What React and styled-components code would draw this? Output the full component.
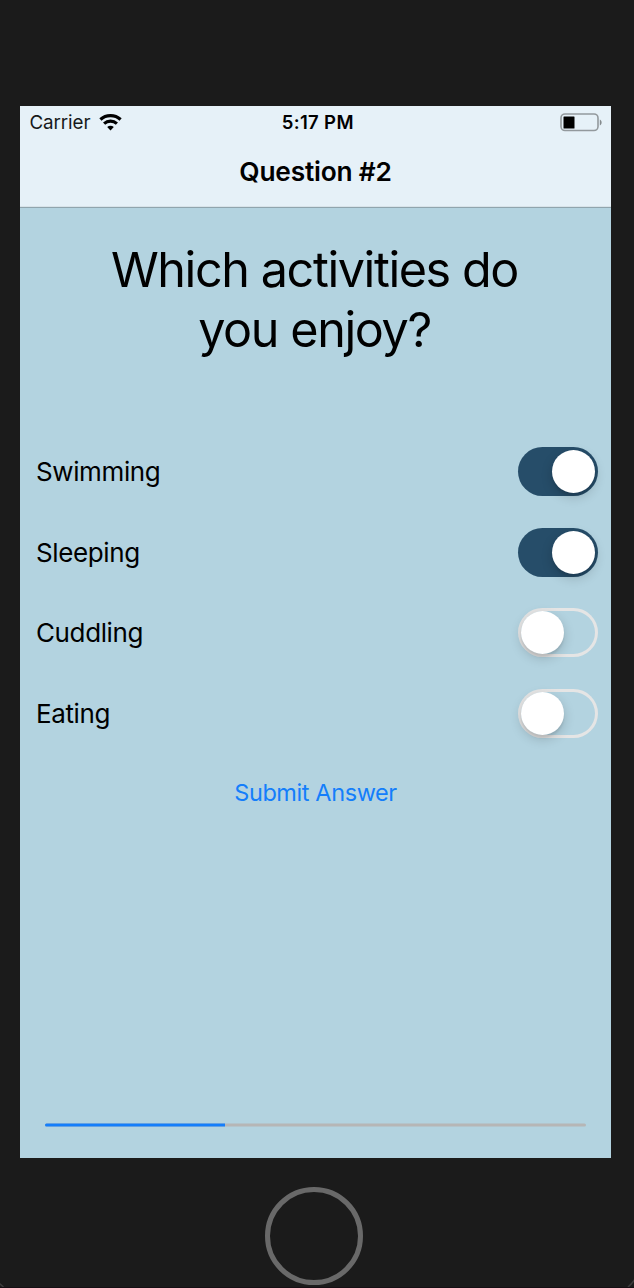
import React from 'react';
import styled, { createGlobalStyle } from 'styled-components';

const Global = createGlobalStyle`
  * { box-sizing: border-box; }
  body { margin: 0; background: #1a1a1a; font-family: Inter, sans-serif; color: #000; }
`;
const Device = styled.main`
  position: relative;
  height: 1288px;
  width: 634px;
  padding: 106px 23px 0 20px;
  background: #1b1b1b;
  border-bottom: 1px solid #160f14;
  overflow: hidden;
`;
const DeviceCorners = styled.svg`
  position: absolute;
  left: 0;
  bottom: 0;
`;
const Screen = styled.section`
  height: 1052px;
  background: #b3d3e0;
  display: flex;
  flex-direction: column;
`;
const Header = styled.header`
  height: 102px;
  flex: none;
  background: #e6f1f8;
  border-bottom: 1px solid #90a5ae;
  box-shadow: inset 0 -1px #d8e3e9;
`;
const StatusBar = styled.div`
  height: 33px;
  padding: 0 9px 0 9.5px;
  display: grid;
  grid-template-columns: 1fr auto 1fr;
  align-items: center;
`;
const Carrier = styled.div`
  display: flex;
  align-items: center;
  gap: 8.5px;
  font-size: 18.8px;
  line-height: 24px;
  letter-spacing: -0.1px;
  color: #16191b;
`;
const Time = styled.time`
  font-size: 18.5px;
  font-weight: 600;
  line-height: 24px;
  letter-spacing: 0.35px;
  padding: 0 0 1px 4px;
`;
const Battery = styled.svg`
  justify-self: end;
`;
const NavTitle = styled.h1`
  margin: 0;
  height: 66px;
  line-height: 66px;
  text-align: center;
  font-size: 26.3px;
  font-weight: 600;
  letter-spacing: -0.2px;
`;
const Question = styled.h2`
  margin: 32px 0 0;
  padding-right: 2px;
  text-align: center;
  font-weight: 400;
  font-size: 48.5px;
  line-height: 60px;
  letter-spacing: -1.4px;
`;
const Options = styled.div`
  margin-top: 71.7px;
`;
const Row = styled.label`
  height: 80.4px;
  padding: 0 13px 0 16px;
  display: flex;
  align-items: center;
  justify-content: space-between;
  font-size: 26px;
  letter-spacing: -0.38px;
`;
const Track = styled.span`
  width: 80px;
  height: 49px;
  padding: 3px;
  border-radius: 25px;
  display: flex;
  justify-content: ${p => (p.$on ? 'flex-end' : 'flex-start')};
  background: ${p => (p.$on ? '#264d69' : 'transparent')};
  box-shadow: ${p => (p.$on ? 'none' : 'inset 0 0 0 3px #e5e5e5')};
`;
const Knob = styled.span`
  width: 43px;
  height: 43px;
  border-radius: 50%;
  background: #fff;
  box-shadow: 0 4px 12px rgba(0,0,0,.18), 0 3px 2px rgba(0,0,0,.07);
`;
const Submit = styled.button`
  align-self: center;
  border: 0;
  padding: 0;
  margin-top: 22px;
  background: none;
  color: #147efb;
  font: 400 23.5px/36px Inter, sans-serif;
  letter-spacing: -0.4px;
`;
const Progress = styled.div`
  margin: auto 25px 32px;
  height: 3px;
  border-radius: 2px;
  background: #b6b6b6;
  transform: translateY(0.5px);
`;
const Fill = styled.div`
  height: 100%;
  width: 33.3%;
  border-radius: 2px 0 0 2px;
  background: #147efb;
`;
const Home = styled.div`
  width: 98px;
  height: 98px;
  margin: 29px 0 0 245px;
  border: 5px solid #696969;
  border-radius: 50%;
`;

const options = [['Swimming', true], ['Sleeping', true], ['Cuddling', false], ['Eating', false]];

export default function App() {
  return (
    <Device>
      <Global />
      <Screen>
        <Header>
          <StatusBar>
            <Carrier>
              <span>Carrier</span>
              <svg width="23" height="17" viewBox="0 0 23 17" fill="none" stroke="#000" strokeWidth="3.2">
                <path d="M1.4 5.5c5.7-5.2 14.5-5.2 20.2 0" />
                <path d="M5.1 9.6c3.6-3.2 9.2-3.2 12.8 0" />
                <path d="M11.5 16.4l-3.3-3.3c1.8-1.7 4.8-1.7 6.6 0z" fill="#000" stroke="none" />
              </svg>
            </Carrier>
            <Time>5:17 PM</Time>
            <Battery width="43" height="19" viewBox="0 0 43 19">
              <rect x="2" y="1" width="37" height="16.5" rx="4" fill="none" stroke="#93999d" strokeWidth="1.6" />
              <rect x="4.5" y="3.5" width="11" height="12" rx="0.5" />
              <path d="M40.8 6.5c2.4 1 2.4 5 0 6z" fill="#858b8e" />
            </Battery>
          </StatusBar>
          <NavTitle>Question #2</NavTitle>
        </Header>
        <Question>Which activities do<br />you enjoy?</Question>
        <Options>
          {options.map(([name, on]) => (
            <Row key={name}>
              <span>{name}</span>
              <Track $on={on}><Knob /></Track>
            </Row>
          ))}
        </Options>
        <Submit>Submit Answer</Submit>
        <Progress><Fill /></Progress>
      </Screen>
      <Home />
      <DeviceCorners width="634" height="10" viewBox="0 0 634 10" fill="none" stroke="#3c3c3c" strokeWidth="1.5">
        <path d="M-1 6l4.5 4M635 2q-3 4.5-7 8" />
      </DeviceCorners>
    </Device>
  );
}
